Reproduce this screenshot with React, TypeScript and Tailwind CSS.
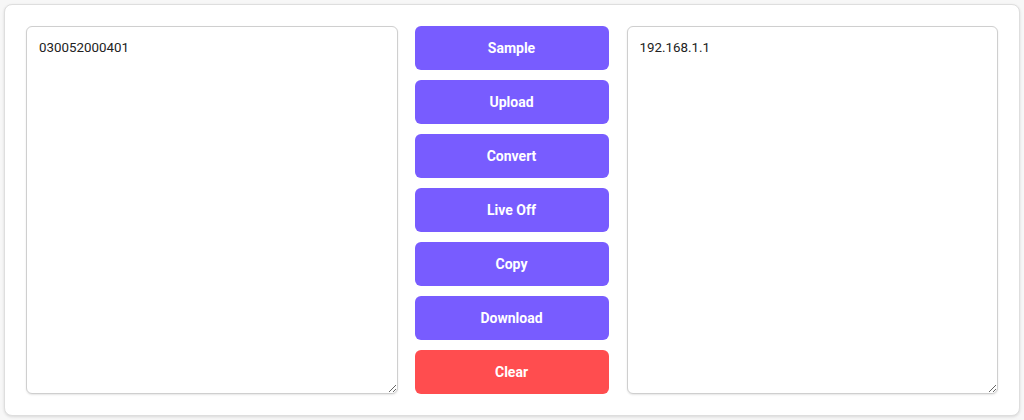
import { useState } from "react";

const buttons = ["Sample", "Upload", "Convert", "Live Off", "Copy", "Download"];

export default function App() {
  const [input, setInput] = useState("030052000401");
  const [output, setOutput] = useState("192.168.1.1");

  return (
    <div className="h-[420px] bg-[#f7f7f7] p-1 font-['Roboto',sans-serif]">
      <div className="flex h-[412px] gap-[17px] rounded-lg border border-[#dedede] bg-white p-[21px] shadow-[0_1px_3px_rgba(0,0,0,0.12)]">
        <textarea
          className="flex-1 resize-y rounded-md border border-[#cfcfcf] bg-white px-3 py-[11px] text-[13.33px] leading-5 text-[#222] shadow-[0_1px_2px_rgba(0,0,0,0.1)] outline-none"
          value={input}
          onChange={e => setInput(e.target.value)}
        />
        <div className="flex w-[194px] flex-col gap-[10px]">
          {buttons.map(label => (
            <button
              key={label}
              className="h-[44px] rounded-md bg-[#785cff] text-sm font-bold text-white"
            >
              {label}
            </button>
          ))}
          <button
            className="h-[44px] rounded-md bg-[#ff4d4f] text-sm font-bold text-white"
            onClick={() => { setInput(""); setOutput(""); }}
          >
            Clear
          </button>
        </div>
        <textarea
          className="ml-px flex-1 resize-y rounded-md border border-[#cfcfcf] bg-white px-3 py-[11px] text-[13.33px] leading-5 text-[#222] shadow-[0_1px_2px_rgba(0,0,0,0.1)] outline-none"
          value={output}
          onChange={e => setOutput(e.target.value)}
        />
      </div>
    </div>
  );
}
